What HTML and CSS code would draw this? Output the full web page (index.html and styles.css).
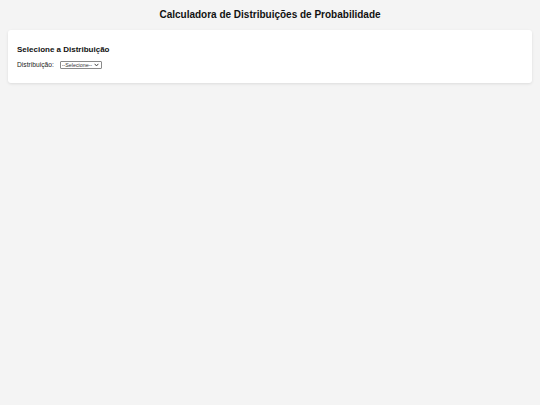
FILE: index.html
```html
<!DOCTYPE html>
<html lang="pt">
<head>
<meta charset="utf-8">
<title>Calculadora de Distribuições de Probabilidade</title>
<link rel="stylesheet" href="styles.css">
</head>
<body>
<h1 class="title">Calculadora de Distribuições de Probabilidade</h1>
<div class="card">
  <h2 class="card-title">Selecione a Distribuição</h2>
  <div class="field">
    <label class="field-label" for="dist">Distribuição:</label>
    <select class="field-select" id="dist">
      <option>--Selecione--</option>
      <option>Binomial</option>
      <option>Poisson</option>
      <option>Normal</option>
    </select>
  </div>
</div>
</body>
</html>
```
FILE: styles.css
```css
html, body {
  margin: 0;
  padding: 0;
}
body {
  background: #f4f4f4;
  font-family: "Liberation Sans", Arial, sans-serif;
  color: #000;
  padding: 8px;
  min-height: 405px;
  box-sizing: border-box;
}
.title {
  margin: 0;
  padding: 1px 0 0;
  font-size: 10px;
  line-height: 12px;
  font-weight: bold;
  text-align: center;
  color: #111;
}
.card {
  margin-top: 9px;
  background: #fff;
  border-radius: 3px;
  box-shadow: 0 1px 3px rgba(0, 0, 0, 0.1);
  padding: 15px 9px 14px;
}
.card-title {
  margin: 0 0 6px;
  font-size: 8px;
  line-height: 10px;
  font-weight: bold;
  color: #111;
}
.field {
  display: flex;
  align-items: center;
  gap: 6px;
}
.field-label {
  font-size: 6.7px;
  line-height: 8px;
  color: #222;
}
.field-select {
  -webkit-appearance: none;
  appearance: none;
  font-family: "Liberation Sans", Arial, sans-serif;
  font-size: 5.3px;
  line-height: 6px;
  color: #333;
  width: 42px;
  height: 8px;
  padding: 0 0 0 1px;
  margin: 0;
  border: 1px solid #8a8a8a;
  border-radius: 1px;
  background: #fff url("data:image/svg+xml,%3Csvg xmlns='http://www.w3.org/2000/svg' width='6' height='4' viewBox='0 0 6 4'%3E%3Cpath d='M0.8 0.8 L3 3 L5.2 0.8' fill='none' stroke='%23333' stroke-width='1'/%3E%3C/svg%3E") no-repeat right 1.5px center / 5px 3.5px;
}
```
